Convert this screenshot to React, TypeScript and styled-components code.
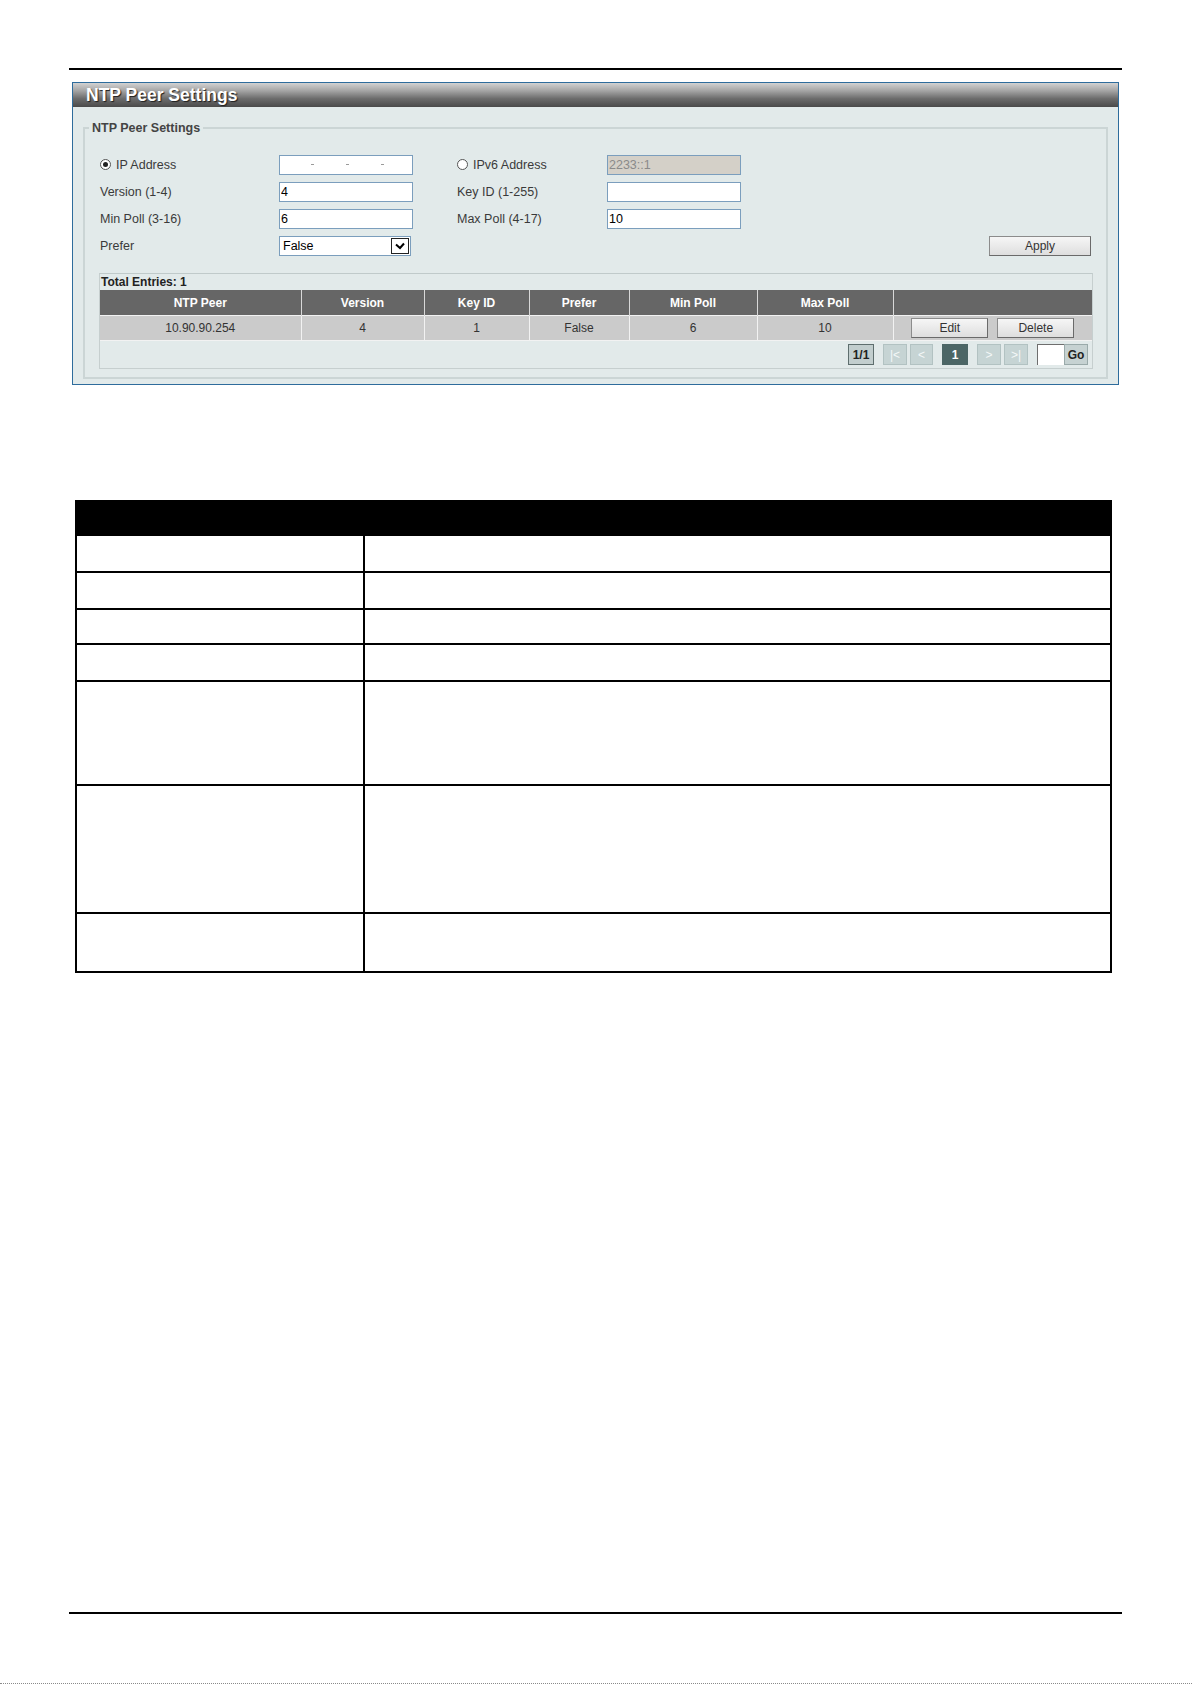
import * as React from "react";
import styled, { createGlobalStyle } from "styled-components";

const GlobalStyle = createGlobalStyle`
  html, body {
    margin: 0;
    padding: 0;
    background: #fff;
  }
  body {
    font-family: "Liberation Sans", Arial, sans-serif;
    font-size: 12px;
    color: #333;
  }
`;

const Page = styled.div`
  width: 1192px;
  height: 1684px;
  display: flex;
  flex-direction: column;
  overflow: hidden;
`;

const TopRule = styled.div`
  margin: 68px 0 0 69px;
  width: 1053px;
  height: 2px;
  background: #000;
`;

const BottomRule = styled.div`
  margin: auto 0 0 69px;
  width: 1053px;
  height: 2px;
  background: #000;
`;

const DottedEdge = styled.div`
  margin-top: 69px;
  height: 0;
  border-top: 1px dotted #8a8a8a;
`;

const Panel = styled.section`
  margin: 12px 0 0 72px;
  width: 1047px;
  box-sizing: border-box;
  border: 1px solid #2e6c9c;
  background: #e2eaea;
  padding-bottom: 5px;
`;

const TitleBar = styled.div`
  height: 24px;
  background: linear-gradient(#d2d2d2 0%, #a8a8a8 30%, #6c6c6c 65%, #4a4a4a 100%);
  color: #fff;
  font-weight: bold;
  font-size: 17.5px;
  line-height: 24px;
  padding-left: 13px;
  text-shadow: 1px 1px 1px #1e1e1e;
`;

const FieldSet = styled.fieldset`
  margin: 14px 10px 0 10px;
  padding: 0;
  border: 2px solid #cbd5d5;
  min-width: 0;
`;

const Legend = styled.legend`
  margin-left: 4px;
  padding: 0 3px;
  font-weight: bold;
  font-size: 12.5px;
  line-height: 14px;
  color: #444;
`;

const FieldBody = styled.div`
  padding: 16px 13px 8px 14px;
`;

const FormGrid = styled.div`
  display: grid;
  grid-template-columns: 179px 178px 150px 1fr;
  grid-auto-rows: 27px;
  align-items: center;
  padding-left: 1px;
`;

const Label = styled.label`
  display: flex;
  align-items: center;
  gap: 5px;
  color: #3a3a3a;
  font-size: 12.5px;
`;

const Radio = styled.span<{ $checked?: boolean }>`
  width: 11px;
  height: 11px;
  box-sizing: border-box;
  border-radius: 50%;
  border: 1px solid #555;
  background: #fff;
  display: inline-flex;
  align-items: center;
  justify-content: center;
  &::after {
    content: "";
    width: 5px;
    height: 5px;
    border-radius: 50%;
    background: ${(p) => (p.$checked ? "#222" : "transparent")};
  }
`;

const Input = styled.input<{ $disabled?: boolean }>`
  width: 134px;
  height: 20px;
  box-sizing: border-box;
  border: 1px solid #7b9ebd;
  padding: 0 1px;
  font-family: "Liberation Sans", Arial, sans-serif;
  font-size: 12.5px;
  color: ${(p) => (p.$disabled ? "#8a8a8a" : "#000")};
  background: ${(p) => (p.$disabled ? "#d4d0c8" : "#fff")};
  outline: none;
`;

const IpBox = styled.div`
  width: 134px;
  height: 20px;
  box-sizing: border-box;
  border: 1px solid #7b9ebd;
  background: #fff;
  display: grid;
  grid-template-columns: 31px 3px 32px 3px 32px 3px 1fr;
  align-items: center;
`;

const IpDot = styled.span`
  width: 3px;
  height: 1px;
  background: #9a9a9a;
`;

const SelectBox = styled.div`
  width: 132px;
  height: 20px;
  box-sizing: border-box;
  border: 1px solid #7b9ebd;
  background: #fff;
  display: flex;
  align-items: center;
  justify-content: space-between;
  padding: 0 1px 0 3px;
  color: #000;
  font-size: 12.5px;
`;

const SelectArrow = styled.span`
  width: 18px;
  height: 16px;
  box-sizing: border-box;
  border: 1px solid #222;
  background: #fff;
  display: flex;
  align-items: center;
  justify-content: center;
`;

const Button = styled.button<{ $w: number }>`
  width: ${(p) => p.$w}px;
  height: 20px;
  box-sizing: border-box;
  border: 1px solid #8c8c8c;
  border-right-color: #6a6a6a;
  border-bottom-color: #6a6a6a;
  background: linear-gradient(#f6f6f6, #dedede);
  color: #333;
  font-family: "Liberation Sans", Arial, sans-serif;
  font-size: 12px;
  padding: 0;
`;

const ApplyCell = styled.div`
  grid-column: 4;
  justify-self: end;
  margin-right: 2px;
`;

const EntriesBox = styled.div`
  margin-top: 14px;
  border: 1px solid #c6cfcf;
  border-top-color: #c0caca;
`;

const EntriesTitle = styled.div`
  height: 16px;
  line-height: 16px;
  font-weight: bold;
  color: #222;
  padding-left: 1px;
`;

const DataTable = styled.table`
  width: 100%;
  border-collapse: collapse;
  table-layout: fixed;
`;

const Th = styled.th`
  height: 25px;
  padding: 0;
  background: #666;
  color: #fff;
  font-weight: bold;
  font-size: 12px;
  text-align: center;
  border-left: 1px solid #d8d8d8;
  &:first-child {
    border-left: none;
  }
`;

const Td = styled.td`
  height: 24px;
  padding: 0;
  background: #cbcbcb;
  color: #333;
  font-size: 12px;
  text-align: center;
  border-left: 1px solid #f2f2f2;
  border-top: 1px solid #f2f2f2;
  &:first-child {
    border-left: none;
  }
`;

const Actions = styled.div`
  display: flex;
  justify-content: center;
  gap: 9px;
`;

const Pager = styled.div`
  height: 27px;
  display: flex;
  align-items: center;
  justify-content: flex-end;
  gap: 9px;
  padding-right: 4px;
  border-top: 1px solid #f2f2f2;
`;

const PagerGroup = styled.div<{ $gap: number }>`
  display: flex;
  align-items: center;
  gap: ${(p) => p.$gap}px;
`;

const PageBox = styled.span<{ $kind: "info" | "off" | "current" | "go"; $w: number }>`
  width: ${(p) => p.$w}px;
  height: 21px;
  box-sizing: border-box;
  display: inline-flex;
  align-items: center;
  justify-content: center;
  font-size: 12px;
  font-weight: ${(p) => (p.$kind === "off" ? "normal" : "bold")};
  color: ${(p) =>
    p.$kind === "current" ? "#fff" : p.$kind === "off" ? "#f4f8f8" : "#222"};
  background: ${(p) =>
    p.$kind === "current"
      ? "#4c6666"
      : p.$kind === "info"
      ? "#c2cece"
      : p.$kind === "go"
      ? "#c6d2d2"
      : "#c6d4d4"};
  border: 1px solid
    ${(p) =>
      p.$kind === "info" ? "#5e6e6e" : p.$kind === "off" ? "#b2c2c2" : p.$kind === "go" ? "#9aaaaa" : "#4c6666"};
`;

const PageInput = styled.span`
  width: 27px;
  height: 21px;
  box-sizing: border-box;
  background: #fff;
  border-top: 1px solid #6e6e6e;
  border-left: 1px solid #6e6e6e;
`;

const DescTable = styled.table`
  margin: 115px 0 0 75px;
  width: 1037px;
  border-collapse: collapse;
  table-layout: fixed;
  border: 2px solid #000;
`;

const DescHead = styled.th`
  height: 32px;
  padding: 0;
  background: #000;
  color: #fff;
`;

const DescCell = styled.td<{ $h: number }>`
  height: ${(p) => p.$h}px;
  padding: 0;
  border: 2px solid #000;
`;

const Chevron = () => (
  <svg width="10" height="8" viewBox="0 0 10 8">
    <path d="M1 2.5 L5 6 L9 1.5" fill="none" stroke="#000" strokeWidth="2" />
  </svg>
);

const peers = [
  { peer: "10.90.90.254", version: "4", key: "1", prefer: "False", min: "6", max: "10" },
];

const columns = [
  { title: "NTP Peer", width: 201 },
  { title: "Version", width: 123 },
  { title: "Key ID", width: 105 },
  { title: "Prefer", width: 100 },
  { title: "Min Poll", width: 128 },
  { title: "Max Poll", width: 136 },
  { title: "", width: 199 },
];

const descRows = [35, 35, 33, 35, 102, 126, 57];

const App: React.FunctionComponent = () => {
  return (
    <Page>
      <GlobalStyle />
      <TopRule />

      <Panel>
        <TitleBar>NTP Peer Settings</TitleBar>
        <FieldSet>
          <Legend>NTP Peer Settings</Legend>
          <FieldBody>
            <FormGrid>
              <Label>
                <Radio $checked />
                IP Address
              </Label>
              <IpBox>
                <span />
                <IpDot />
                <span />
                <IpDot />
                <span />
                <IpDot />
                <span />
              </IpBox>
              <Label>
                <Radio />
                IPv6 Address
              </Label>
              <Input $disabled readOnly value="2233::1" />

              <Label>Version (1-4)</Label>
              <Input readOnly value="4" />
              <Label>Key ID (1-255)</Label>
              <Input readOnly value="" />

              <Label>Min Poll (3-16)</Label>
              <Input readOnly value="6" />
              <Label>Max Poll (4-17)</Label>
              <Input readOnly value="10" />

              <Label>Prefer</Label>
              <SelectBox>
                <span>False</span>
                <SelectArrow>
                  <Chevron />
                </SelectArrow>
              </SelectBox>
              <ApplyCell>
                <Button $w={102}>Apply</Button>
              </ApplyCell>
            </FormGrid>

            <EntriesBox>
              <EntriesTitle>Total Entries: 1</EntriesTitle>
              <DataTable>
                <colgroup>
                  {columns.map((c, i) => (
                    <col key={i} style={{ width: c.width }} />
                  ))}
                </colgroup>
                <thead>
                  <tr>
                    {columns.map((c, i) => (
                      <Th key={i}>{c.title}</Th>
                    ))}
                  </tr>
                </thead>
                <tbody>
                  {peers.map((p) => (
                    <tr key={p.peer}>
                      <Td>{p.peer}</Td>
                      <Td>{p.version}</Td>
                      <Td>{p.key}</Td>
                      <Td>{p.prefer}</Td>
                      <Td>{p.min}</Td>
                      <Td>{p.max}</Td>
                      <Td>
                        <Actions>
                          <Button $w={77}>Edit</Button>
                          <Button $w={77}>Delete</Button>
                        </Actions>
                      </Td>
                    </tr>
                  ))}
                </tbody>
              </DataTable>
              <Pager>
                <PageBox $kind="info" $w={26}>1/1</PageBox>
                <PagerGroup $gap={3}>
                  <PageBox $kind="off" $w={24}>|&lt;</PageBox>
                  <PageBox $kind="off" $w={23}>&lt;</PageBox>
                </PagerGroup>
                <PageBox $kind="current" $w={26}>1</PageBox>
                <PagerGroup $gap={3}>
                  <PageBox $kind="off" $w={24}>&gt;</PageBox>
                  <PageBox $kind="off" $w={24}>&gt;|</PageBox>
                </PagerGroup>
                <PagerGroup $gap={0}>
                  <PageInput />
                  <PageBox $kind="go" $w={24}>Go</PageBox>
                </PagerGroup>
              </Pager>
            </EntriesBox>
          </FieldBody>
        </FieldSet>
      </Panel>

      <DescTable>
        <colgroup>
          <col style={{ width: 288 }} />
          <col />
        </colgroup>
        <thead>
          <tr>
            <DescHead />
            <DescHead />
          </tr>
        </thead>
        <tbody>
          {descRows.map((h, i) => (
            <tr key={i}>
              <DescCell $h={h} />
              <DescCell $h={h} />
            </tr>
          ))}
        </tbody>
      </DescTable>

      <BottomRule />
      <DottedEdge />
    </Page>
  );
};

export default App;
